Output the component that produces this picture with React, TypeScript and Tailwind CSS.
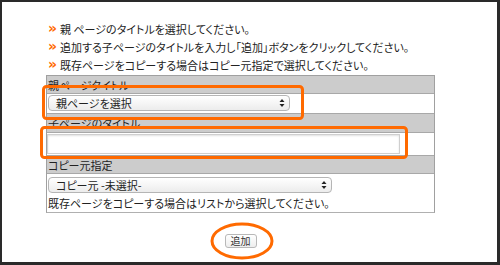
const jp = "font-['Noto_Sans_CJK_JP','Noto_Sans',sans-serif] [font-feature-settings:'palt']";

const SelectBox = ({ label, width }: { label: string; width: string }) => (
  <div
    className={`${width} h-[16px] flex items-center justify-between rounded-[4px] border border-[#b5b5b5] bg-gradient-to-b from-white to-[#ececec] pl-[7px] pr-[4px] text-[11px] leading-none text-[#222]`}
  >
    <span>{label}</span>
    <svg width="6" height="10" viewBox="0 0 6 10">
      <path d="M3 1 L5.5 4 H0.5 Z" fill="#222" />
      <path d="M3 9 L5.5 6 H0.5 Z" fill="#222" />
    </svg>
  </div>
);

const Header = ({ text, h }: { text: string; h: string }) => (
  <div className={`${h} bg-[#cccccc] border-b border-[#a8a8a8] px-[1px] text-[11px] leading-[18px] text-[#222]`}>
    {text}
  </div>
);

export default function App() {
  const notes = [
    "親 ページのタイトルを選択してください。",
    "追加する子ページのタイトルを入力し「追加」ボタンをクリックしてください。",
    "既存ページをコピーする場合はコピー元指定で選択してください。",
  ];

  return (
    <div className={`relative w-[500px] h-[265px] bg-white border-l-2 border-t-2 border-r-[3px] border-b-[3px] border-[#2a2a2a] ${jp}`}>
      <ul className="pt-[18px] pl-[46px]">
        {notes.map((n) => (
          <li key={n} className="flex items-center h-[18px] text-[11px] text-[#222]">
            <span className="w-[12px] text-[#ff6a00] font-bold text-[14px] font-['DejaVu_Sans',sans-serif] leading-none -mt-[2px]">»</span>
            {n}
          </li>
        ))}
      </ul>

      <div className="ml-[44px] mt-[1px] w-[389px] border border-[#a0a0a0] border-b-[#b0b0b0]">
        <Header text="親ページタイトル" h="h-[18px]" />
        <div className="h-[20px] bg-white border-b border-[#a8a8a8] pl-[1px] pt-[1px]">
          <SelectBox label="親ページを選択" width="w-[242px]" />
        </div>
        <Header text="子ページのタイトル" h="h-[19px]" />
        <div className="h-[23px] bg-white border-b border-[#a8a8a8] pt-[1px]">
          <div className="w-[353px] h-[20px] border border-[#cfcfcf] shadow-[inset_0_1px_2px_rgba(0,0,0,0.12)] bg-white" />
        </div>
        <Header text="コピー元指定" h="h-[18px]" />
        <div className="h-[38px] bg-white pl-[1px] pt-[3px]">
          <SelectBox label="コピー元 -未選択-" width="w-[284px]" />
          <p className="mt-[1px] text-[11px] leading-[18px] text-[#222]">
            既存ページをコピーする場合はリストから選択してください。
          </p>
        </div>
      </div>

      <div className="ml-[44px] w-[389px] flex justify-center mt-[21px]">
        <button className="w-[32px] h-[14px] rounded-[3px] border border-[#b8b8b8] bg-gradient-to-b from-white to-[#eeeeee] text-[10px] leading-none text-[#333]">
          追加
        </button>
      </div>

      <svg className="absolute -left-[2px] -top-[2px] pointer-events-none" width="500" height="265">
        <rect x="43.5" y="86.5" width="259" height="32" rx="3" fill="none" stroke="#ff6a00" strokeWidth="3" />
        <rect x="41.5" y="127.5" width="365" height="30" rx="3" fill="none" stroke="#ff6a00" strokeWidth="3" />
        <ellipse cx="242" cy="241" rx="30" ry="17" fill="none" stroke="#ff6a00" strokeWidth="3" />
      </svg>
    </div>
  );
}
